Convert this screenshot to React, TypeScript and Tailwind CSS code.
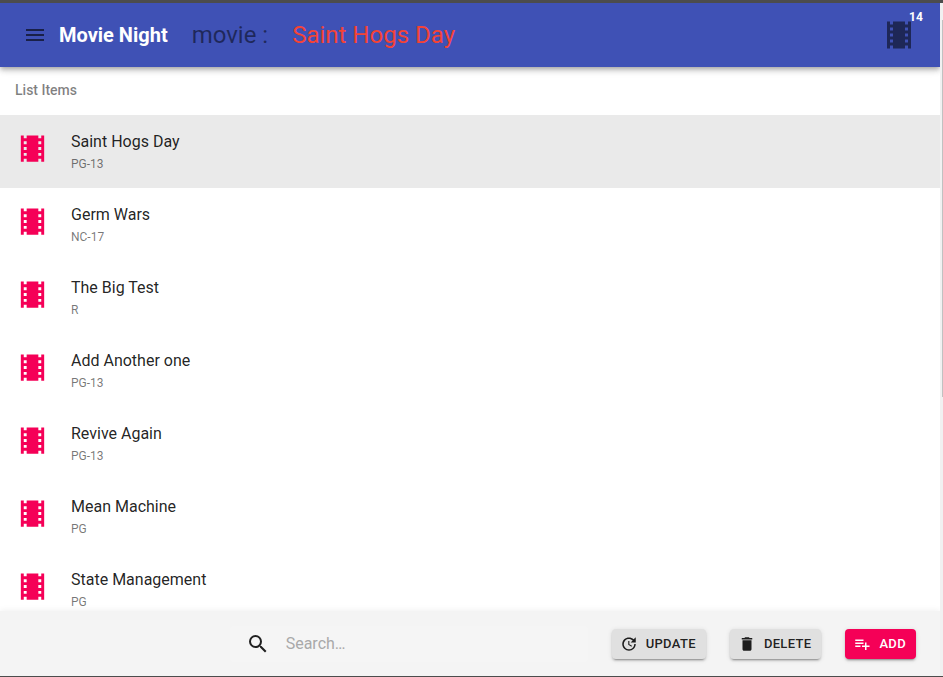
import { useState } from "react";
import {
  MdDelete,
  MdMenu,
  MdPlaylistAdd,
  MdSearch,
  MdTheaters,
  MdUpdate,
} from "react-icons/md";

type Movie = { title: string; rating: string };

const movies: Movie[] = [
  { title: "Saint Hogs Day", rating: "PG-13" },
  { title: "Germ Wars", rating: "NC-17" },
  { title: "The Big Test", rating: "R" },
  { title: "Add Another one", rating: "PG-13" },
  { title: "Revive Again", rating: "PG-13" },
  { title: "Mean Machine", rating: "PG" },
  { title: "State Management", rating: "PG" },
];

const actionClass =
  "flex h-[30px] items-center gap-2 rounded pr-[10px] pl-2 text-[13px] font-medium uppercase tracking-wide shadow-[0_3px_1px_-2px_rgba(0,0,0,0.2),0_2px_2px_0_rgba(0,0,0,0.14),0_1px_5px_0_rgba(0,0,0,0.12)]";

function Header({ movie }: { movie: string }) {
  return (
    <header className="relative z-10 flex h-16 shrink-0 items-center bg-[#3f51b5] px-[23px] shadow-[0_2px_4px_-1px_rgba(0,0,0,0.2),0_4px_5px_0_rgba(0,0,0,0.14),0_1px_10px_0_rgba(0,0,0,0.12)]">
      <button type="button" aria-label="Menu" className="mr-3 text-black/60">
        <MdMenu size={24} />
      </button>
      <h1 className="mr-6 text-xl font-bold text-white">Movie Night</h1>
      <p className="mr-6 text-2xl text-black/50">movie :</p>
      <p className="text-2xl text-[#f44336]">{movie}</p>
      <div className="relative ml-auto text-[#1e2757]">
        <MdTheaters size={36} />
        <span className="absolute -top-2 left-7 text-xs leading-4 font-bold text-white">
          14
        </span>
      </div>
    </header>
  );
}

function MovieList({
  selected,
  onSelect,
}: {
  selected: number;
  onSelect: (index: number) => void;
}) {
  return (
    <section className="min-h-0 flex-1 overflow-hidden">
      <h2 className="flex h-12 items-center px-[15px] pb-[2px] text-sm font-medium text-black/50">
        List Items
      </h2>
      <ul>
        {movies.map((movie, index) => (
          <li key={movie.title}>
            <button
              type="button"
              onClick={() => onSelect(index)}
              className={`flex h-[73px] w-full items-start px-[15px] text-left ${
                index === selected ? "bg-[#eaeaea]" : "bg-white"
              }`}
            >
              <MdTheaters size={35} className="mt-4 mr-[21px] text-[#f50057]" />
              <span className="flex flex-col pt-[15px]">
                <span className="text-base leading-6 text-black/87">
                  {movie.title}
                </span>
                <span className="text-xs leading-5 text-black/54">
                  {movie.rating}
                </span>
              </span>
            </button>
          </li>
        ))}
      </ul>
    </section>
  );
}

function Footer() {
  return (
    <footer className="relative z-10 flex h-[65px] shrink-0 items-center gap-6 bg-[#f4f4f4] pt-px pr-6 shadow-[0_-1px_6px_0_rgba(0,0,0,0.06)]">
      <label className="ml-auto flex h-9 w-[358px] items-center gap-4 rounded bg-[#f5f5f5] pl-4">
        <MdSearch size={24} className="shrink-0 text-black/87" />
        <input
          type="search"
          aria-label="Search"
          placeholder="Search…"
          className="min-w-0 flex-1 bg-transparent text-base text-black/87 outline-none placeholder:text-[#a9a9a9]"
        />
      </label>
      <button type="button" className={`${actionClass} bg-[#e0e0e0] text-black/87`}>
        <MdUpdate size={18} />
        Update
      </button>
      <button type="button" className={`${actionClass} bg-[#e0e0e0] text-black/87`}>
        <MdDelete size={18} />
        Delete
      </button>
      <button type="button" className={`${actionClass} bg-[#f50057] font-bold text-white`}>
        <MdPlaylistAdd size={18} />
        Add
      </button>
    </footer>
  );
}

export default function App() {
  const [selected, setSelected] = useState(0);
  return (
    <div className="flex h-screen flex-col border-t-[3px] border-b border-[#4c4c4c] bg-white font-['Roboto','Liberation_Sans',sans-serif]">
      <div className="flex min-h-0 flex-1">
        <main className="flex min-w-0 flex-1 flex-col overflow-hidden">
          <Header movie={movies[selected].title} />
          <MovieList selected={selected} onSelect={setSelected} />
          <Footer />
        </main>
        <div className="w-[3px] bg-[#f1f1f1] pt-[17px] pl-[2px]">
          <div className="h-[57.5%] bg-[#c1c1c1]" />
        </div>
      </div>
    </div>
  );
}
